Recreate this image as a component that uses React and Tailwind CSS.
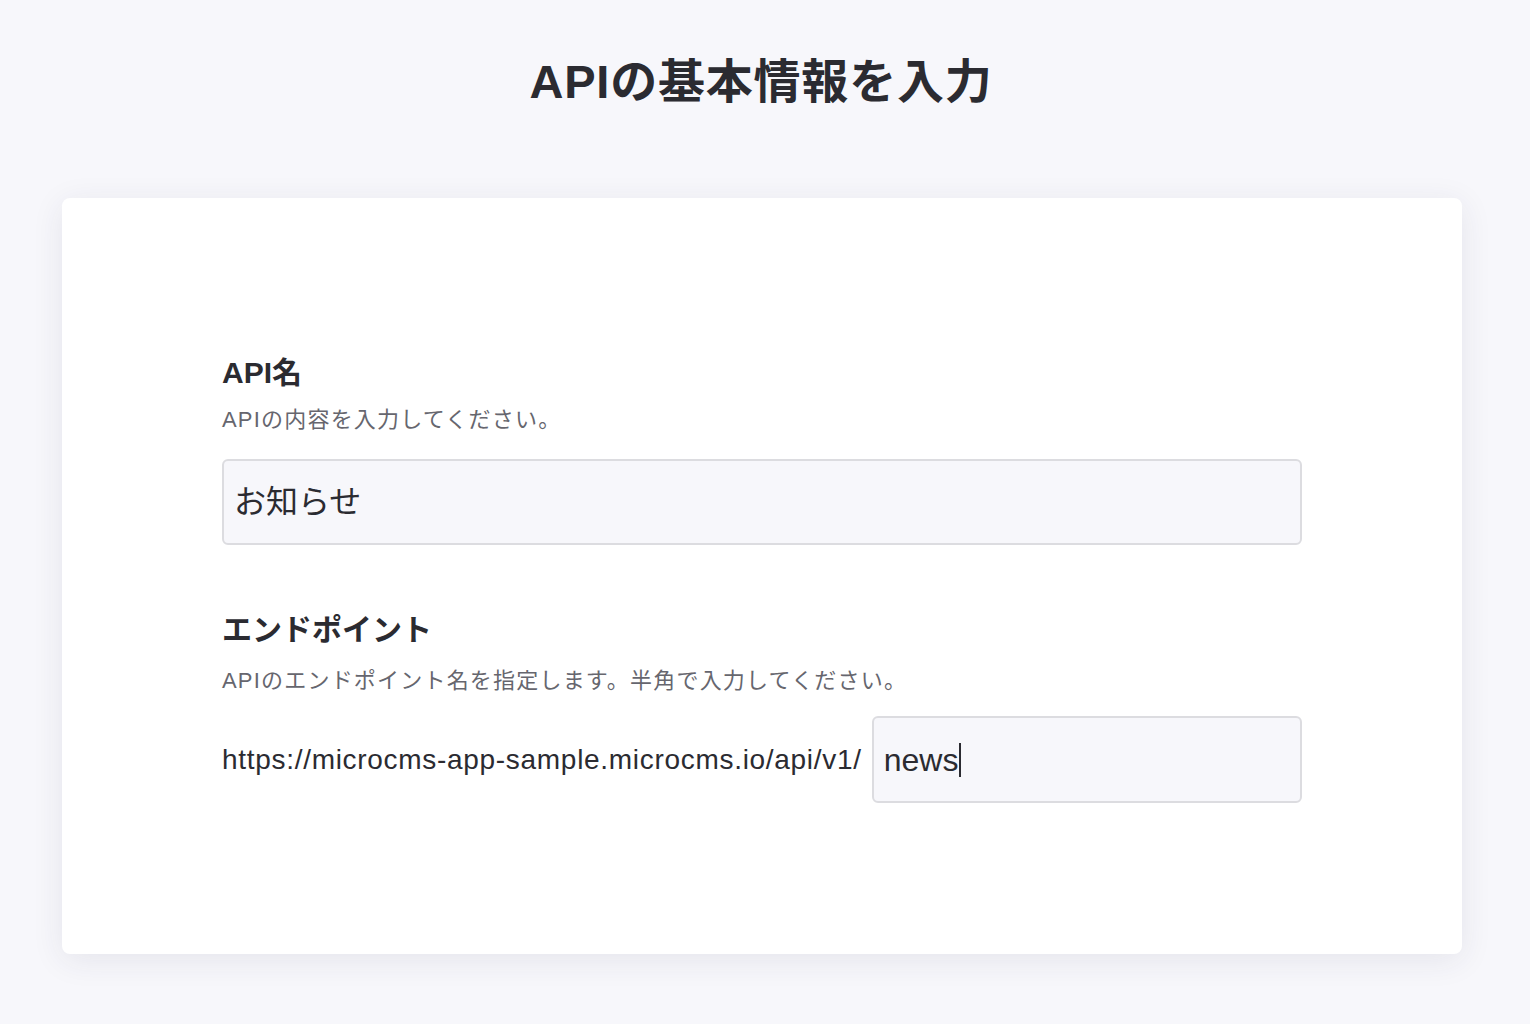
export default function App() {
  const font = { fontFamily: '"Liberation Sans", "Noto Sans CJK JP", sans-serif' };
  return (
    <div className="min-h-[1024px] w-full bg-[#f7f7fb] text-[#2b2b31]" style={font}>
      <div className="flex justify-center pt-[47px]">
        <h1 className="text-[47px] leading-[70px] font-bold tracking-[0.8px] translate-x-[-4px]">APIの基本情報を入力</h1>
      </div>
      <div className="ml-[62px] mt-[81px] w-[1400px] rounded-[8px] bg-white px-[160px] pt-[154px] pb-[151px] shadow-[0_6px_32px_rgba(40,40,80,0.09)]">
        <div className="text-[30px] leading-[42px] font-bold">API名</div>
        <div className="mt-[11px] text-[22px] leading-[30px] text-[#66666e] tracking-[1.2px]">APIの内容を入力してください。</div>
        <div className="mt-[24px] flex h-[86px] items-center rounded-[6px] border-2 border-[#dcdce0] bg-[#f7f7fb] px-[10px]">
          <span className="text-[32px]">お知らせ</span>
        </div>
        <div className="mt-[64px] text-[30px] leading-[42px] font-bold">エンドポイント</div>
        <div className="mt-[15px] text-[22px] leading-[30px] text-[#66666e] tracking-[1.2px]">APIのエンドポイント名を指定します。半角で入力してください。</div>
        <div className="mt-[20px] flex items-center gap-[10px]">
          <span className="text-[28px] whitespace-nowrap tracking-[0.7px]">https://microcms-app-sample.microcms.io/api/v1/</span>
          <div className="flex h-[87px] flex-1 items-center rounded-[6px] border-2 border-[#dcdce0] bg-[#f7f7fb] px-[10px]">
            <span className="text-[32px]">news</span>
            <span className="ml-[1px] inline-block h-[34px] w-[2px] bg-[#2b2b31]"></span>
          </div>
        </div>
      </div>
    </div>
  );
}
